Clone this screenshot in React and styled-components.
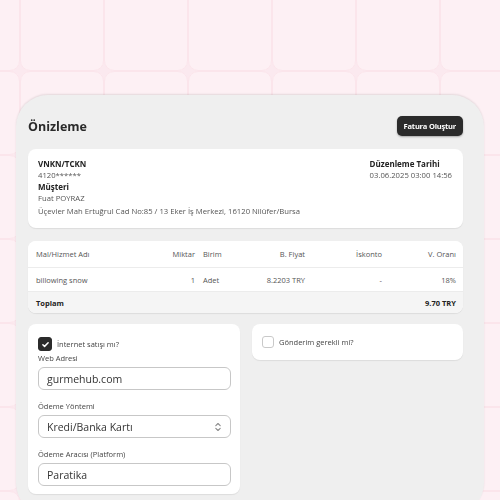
import React from "react";
import styled, { createGlobalStyle } from "styled-components";

const Global = createGlobalStyle`
  html, body { margin: 0; padding: 0; }
  body {
    background: #fbe9ef;
    font-family: "Open Sans", "Noto Sans", sans-serif;
    color: #222;
    overflow: hidden;
  }
  * { box-sizing: border-box; }
`;

const Backdrop = styled.div`
  position: fixed;
  top: -13px;
  left: -64px;
  width: 588px;
  height: 588px;
  display: grid;
  grid-template-columns: repeat(7, 84px);
  grid-auto-rows: 84px;
  z-index: -1;
`;

const Tile = styled.div`
  background: #fdf0f4;
  border: 1px solid #fbe5eb;
  border-radius: 10px;
`;

const Page = styled.div`
  padding: 95px 16px 0 16px;
  height: 500px;
`;

const Card = styled.div`
  background: #efefef;
  border-radius: 32px;
  box-shadow: 0 -1px 2px rgba(0, 0, 0, 0.1);
  padding: 21px 21px 20px 12px;
  min-height: 420px;
  display: flex;
  flex-direction: column;
  gap: 13px;
`;

const Header = styled.div`
  display: flex;
  align-items: center;
  justify-content: space-between;
  height: 20px;
`;

const Title = styled.h1`
  margin: 0;
  font-size: 12.5px;
  font-weight: 700;
  color: #2a2a2a;
`;

const DarkButton = styled.button`
  height: 20px;
  padding: 0 7px;
  border: none;
  border-radius: 5px;
  background: #2b2b2b;
  color: #fff;
  font-family: "Open Sans", sans-serif;
  font-size: 7.5px;
  font-weight: 700;
  letter-spacing: -0.2px;
  box-shadow: 0 1px 2px rgba(0, 0, 0, 0.3);
`;

const Panel = styled.div`
  background: #fff;
  border-radius: 8px;
  box-shadow: 0 1px 1px rgba(0, 0, 0, 0.08);
  overflow: hidden;
`;

const InfoPanel = styled(Panel)`
  padding: 9px 10px 8px 10px;
  display: flex;
  justify-content: space-between;
  height: 79px;
`;

const Col = styled.div`
  display: flex;
  flex-direction: column;
`;

const Label = styled.div`
  font-size: 8px;
  font-weight: 700;
  color: #222;
  line-height: 11.5px;
`;

const Value = styled.div`
  font-size: 7.7px;
  color: #555;
  line-height: 11.5px;
  margin-top: ${(p) => p.$mt || 0}px;
`;

const Row = styled.div`
  display: grid;
  grid-template-columns: 119px 40px 70px 40px 77px 74px;
  align-items: center;
  padding: 0 7px 0 8px;
  height: ${(p) => p.$h}px;
  background: ${(p) => (p.$total ? "#f5f5f5" : "#fff")};
  border-bottom: ${(p) => (p.$line ? "1px solid #ececec" : "none")};
  font-size: 7.5px;
  color: #555;
`;

const Cell = styled.div`
  text-align: ${(p) => p.$align || "left"};
  padding-left: ${(p) => p.$pl || 0}px;
  font-weight: ${(p) => (p.$bold ? 700 : 400)};
  color: ${(p) => (p.$bold ? "#222" : "#555")};
  white-space: nowrap;
`;

const Bottom = styled.div`
  display: grid;
  grid-template-columns: 212px 211px;
  gap: 12px;
  align-items: start;
  margin-top: -2px;
`;

const FormPanel = styled(Panel)`
  padding: 13px 9px 8px 10px;
  display: flex;
  flex-direction: column;
`;

const CheckRow = styled.label`
  display: flex;
  align-items: center;
  gap: 5px;
  font-size: 7.5px;
  color: #444;
  height: 14px;
`;

const Box = styled.span`
  width: ${(p) => (p.$checked ? 14 : 12)}px;
  height: ${(p) => (p.$checked ? 14 : 12)}px;
  border-radius: 3px;
  background: ${(p) => (p.$checked ? "#2b2b2b" : "#fff")};
  border: 1px solid ${(p) => (p.$checked ? "#2b2b2b" : "#c9c9c9")};
  display: flex;
  align-items: center;
  justify-content: center;
`;

const FieldLabel = styled.div`
  font-size: 7.5px;
  color: #444;
  margin-top: ${(p) => p.$mt}px;
  line-height: 10px;
`;

const Input = styled.div`
  margin-top: 4px;
  height: 23px;
  border: 1px solid #c7c7c7;
  border-radius: 6px;
  display: flex;
  align-items: center;
  justify-content: space-between;
  padding: 0 8px;
  font-size: 10.5px;
  color: #333;
`;

const SmallPanel = styled(Panel)`
  padding: 12px 10px;
  height: 36px;
  display: flex;
  align-items: center;
`;

const Check = () => (
  <svg width="9" height="9" viewBox="0 0 24 24" fill="none" stroke="#fff" strokeWidth="4" strokeLinecap="round" strokeLinejoin="round">
    <path d="M5 12.5l4.5 4.5L19 7.5" />
  </svg>
);

const UpDown = () => (
  <svg width="8" height="10" viewBox="0 0 8 10" fill="none" stroke="#8a8a8a" strokeWidth="1.1" strokeLinecap="round" strokeLinejoin="round">
    <path d="M1.8 3.6L4 1.5l2.2 2.1" />
    <path d="M1.8 6.4L4 8.5l2.2-2.1" />
  </svg>
);

export default function App() {
  const tiles = Array.from({ length: 49 });
  return (
    <>
      <Global />
      <Backdrop>
        {tiles.map((_, i) => (
          <Tile key={i} />
        ))}
      </Backdrop>
      <Page>
        <Card>
          <Header>
            <Title>Önizleme</Title>
            <DarkButton>Fatura Oluştur</DarkButton>
          </Header>
          <InfoPanel>
            <Col>
              <Label>VNKN/TCKN</Label>
              <Value>4120******</Value>
              <Label>Müşteri</Label>
              <Value>Fuat POYRAZ</Value>
              <Value $mt={2}>Üçevler Mah Ertuğrul Cad No:85 / 13 Eker İş Merkezi, 16120 Nilüfer/Bursa</Value>
            </Col>
            <Col style={{ marginRight: 1 }}>
              <Label>Düzenleme Tarihi</Label>
              <Value>03.06.2025 03:00 14:56</Value>
            </Col>
          </InfoPanel>
          <Panel>
            <Row $h={27} $line>
              <Cell>Mal/Hizmet Adı</Cell>
              <Cell $align="right">Miktar</Cell>
              <Cell $pl={8}>Birim</Cell>
              <Cell $align="right">B. Fiyat</Cell>
              <Cell $align="right">İskonto</Cell>
              <Cell $align="right">V. Oranı</Cell>
            </Row>
            <Row $h={24} $line>
              <Cell>billowing snow</Cell>
              <Cell $align="right">1</Cell>
              <Cell $pl={8}>Adet</Cell>
              <Cell $align="right">8.2203 TRY</Cell>
              <Cell $align="right">-</Cell>
              <Cell $align="right">18%</Cell>
            </Row>
            <Row $h={21} $total>
              <Cell $bold>Toplam</Cell>
              <Cell />
              <Cell />
              <Cell />
              <Cell />
              <Cell $align="right" $bold>9.70 TRY</Cell>
            </Row>
          </Panel>
          <Bottom>
            <FormPanel>
              <CheckRow>
                <Box $checked>
                  <Check />
                </Box>
                İnternet satışı mı?
              </CheckRow>
              <FieldLabel $mt={2}>Web Adresi</FieldLabel>
              <Input>gurmehub.com</Input>
              <FieldLabel $mt={11}>Ödeme Yöntemi</FieldLabel>
              <Input>
                Kredi/Banka Kartı
                <UpDown />
              </Input>
              <FieldLabel $mt={11}>Ödeme Aracısı (Platform)</FieldLabel>
              <Input>Paratika</Input>
            </FormPanel>
            <SmallPanel>
              <CheckRow>
                <Box />
                Gönderim gerekli mi?
              </CheckRow>
            </SmallPanel>
          </Bottom>
        </Card>
      </Page>
    </>
  );
}
